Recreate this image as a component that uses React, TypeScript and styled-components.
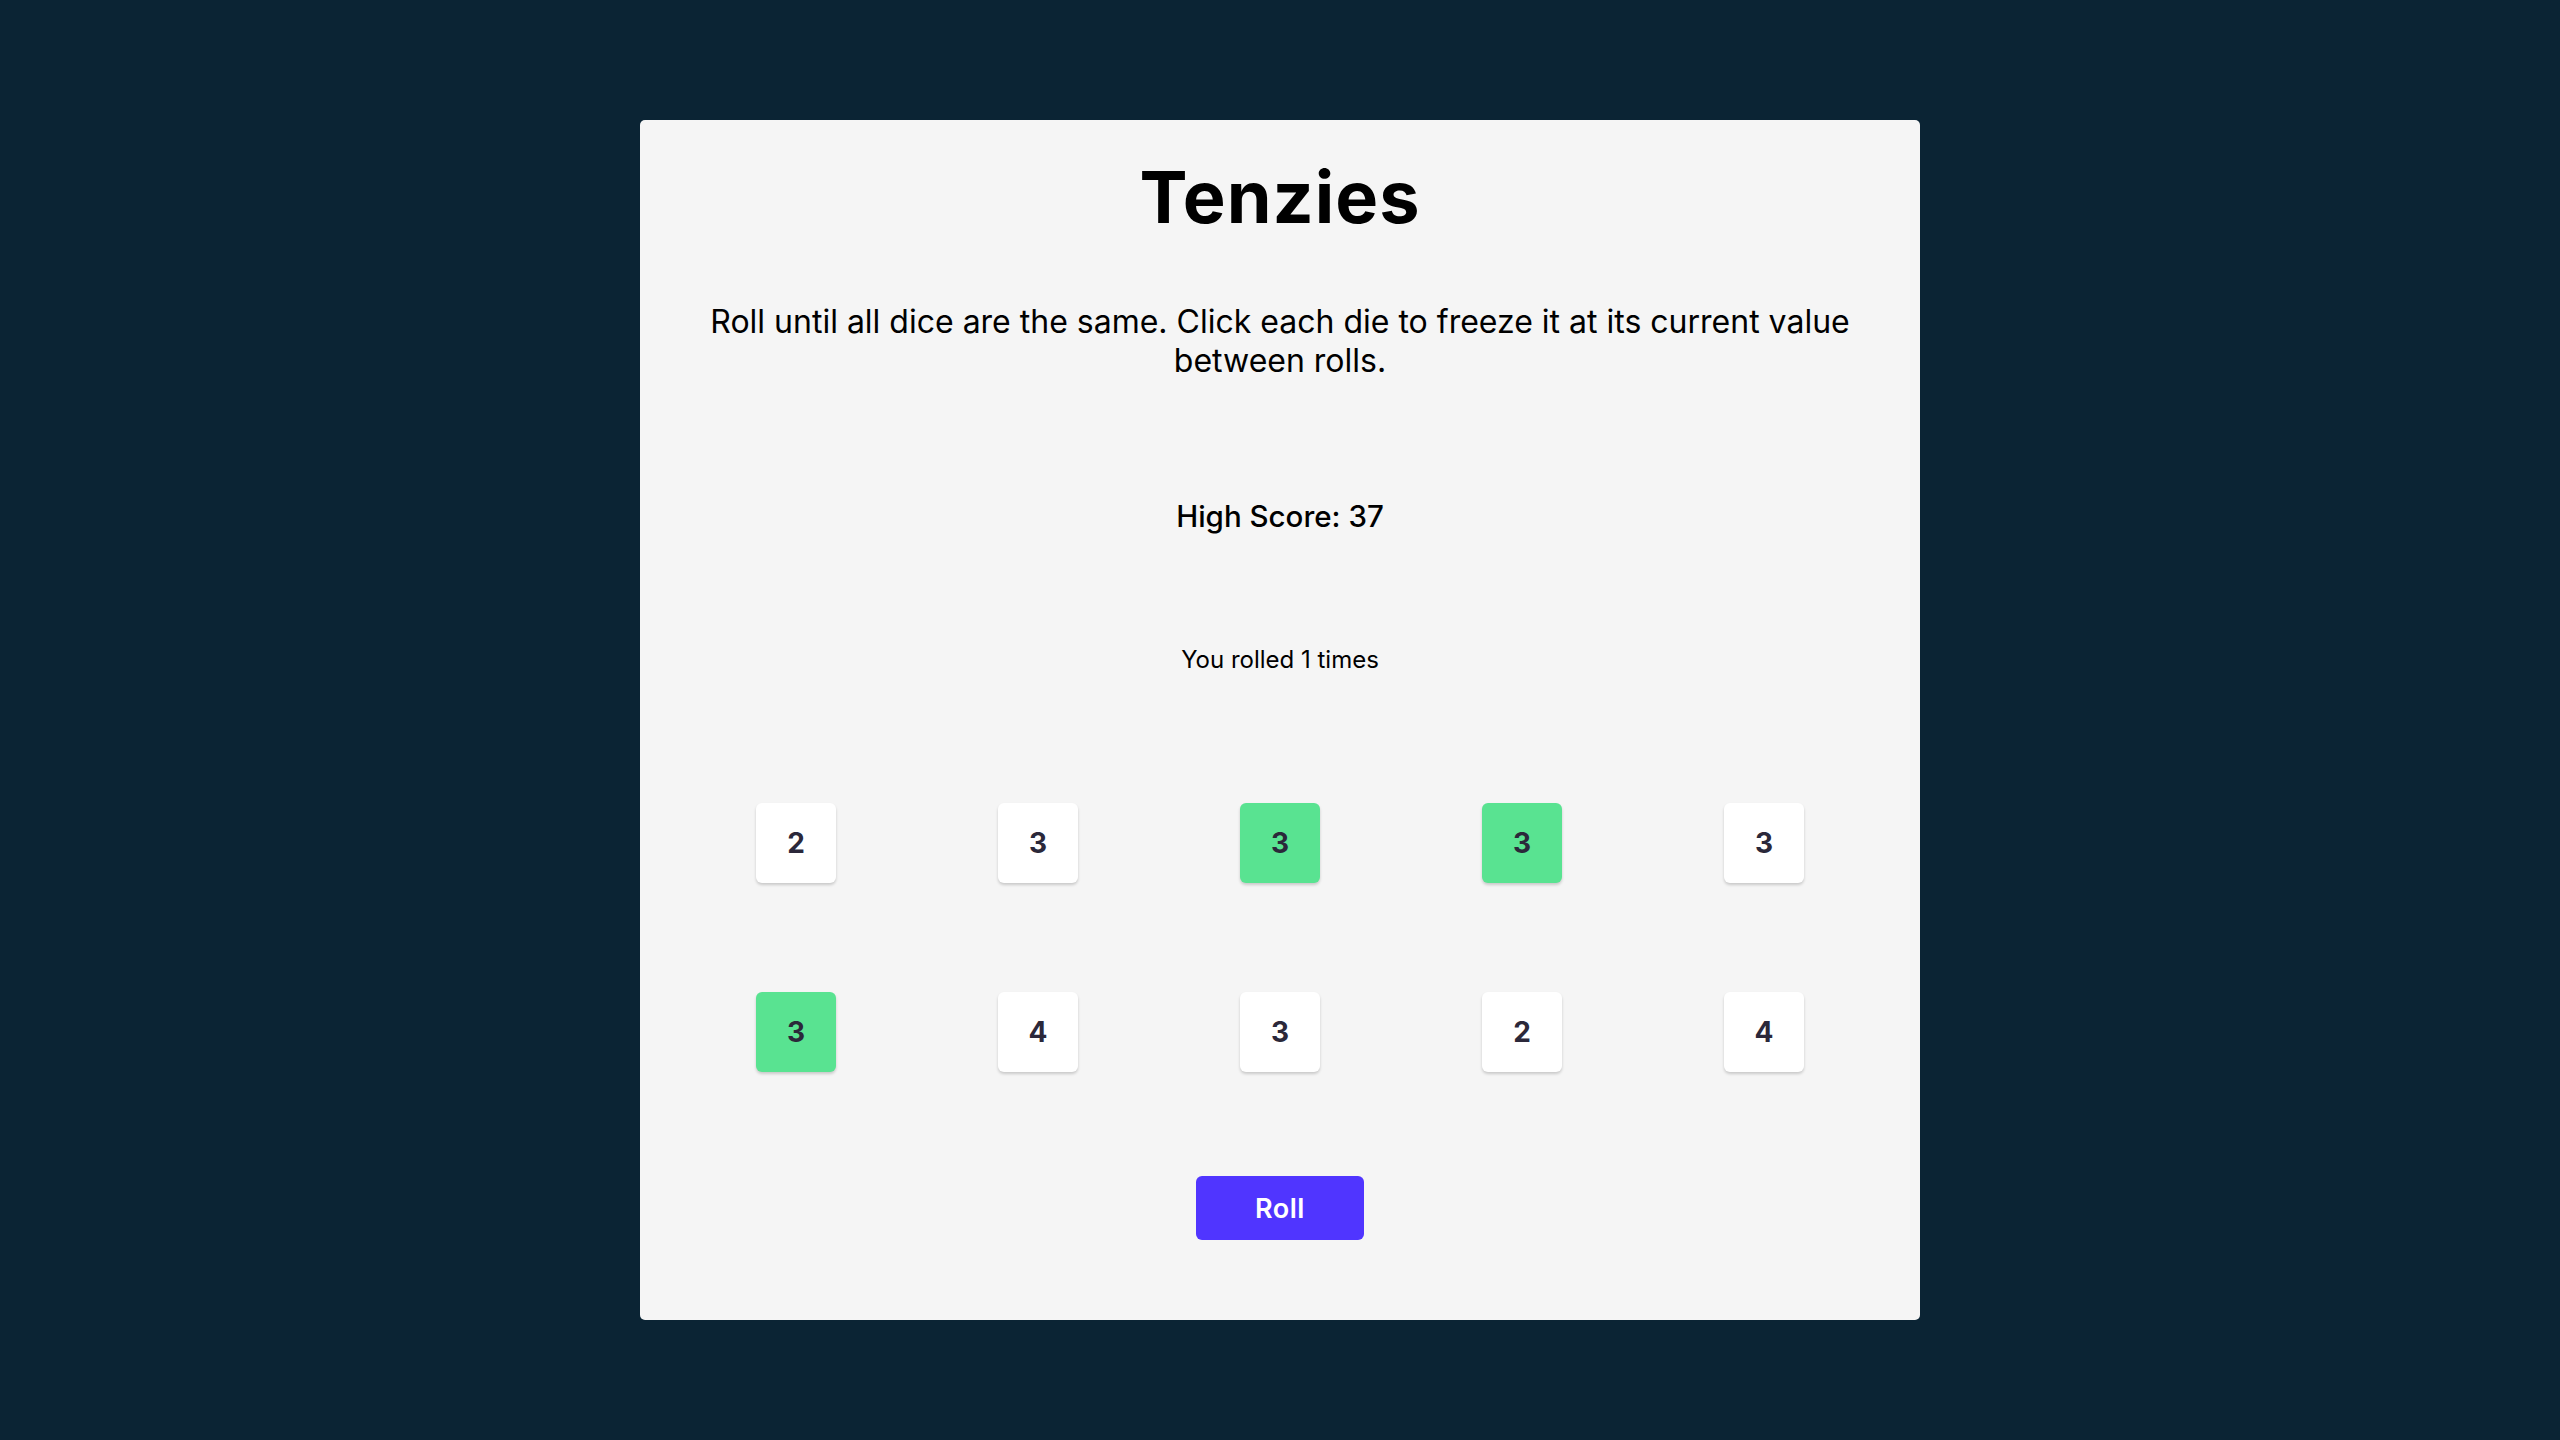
import styled, { createGlobalStyle } from 'styled-components'
import { FC, useState } from 'react'

type Die = {
  id: number
  value: number
  isHeld: boolean
}

const startingDice: Die[] = [
  { id: 1, value: 2, isHeld: false },
  { id: 2, value: 3, isHeld: false },
  { id: 3, value: 3, isHeld: true },
  { id: 4, value: 3, isHeld: true },
  { id: 5, value: 3, isHeld: false },
  { id: 6, value: 3, isHeld: true },
  { id: 7, value: 4, isHeld: false },
  { id: 8, value: 3, isHeld: false },
  { id: 9, value: 2, isHeld: false },
  { id: 10, value: 4, isHeld: false }
]

const randomValue = () => Math.ceil(Math.random() * 6)

const GlobalStyle = createGlobalStyle`
  html,
  body {
    margin: 0;
    padding: 0;
    background-color: #0b2434;
    font-family: Inter, 'Noto Sans', sans-serif;
  }

  * {
    box-sizing: border-box;
  }
`

const App: FC = () => {
  const [dice, setDice] = useState<Die[]>(startingDice)
  const [rolls, setRolls] = useState(1)
  const highScore = 37

  const holdDie = (id: number) => {
    setDice((prev) =>
      prev.map((die) => (die.id === id ? { ...die, isHeld: !die.isHeld } : die))
    )
  }

  const rollDice = () => {
    setDice((prev) =>
      prev.map((die) => (die.isHeld ? die : { ...die, value: randomValue() }))
    )
    setRolls((n) => n + 1)
  }

  return (
    <>
      <GlobalStyle />
      <StyledPage>
        <StyledBoard>
          <StyledTitle>Tenzies</StyledTitle>
          <StyledInstructions>
            Roll until all dice are the same. Click each die to freeze it at its
            current value between rolls.
          </StyledInstructions>
          <StyledHighScore>High Score: {highScore}</StyledHighScore>
          <StyledRollCount>You rolled {rolls} times</StyledRollCount>

          <StyledDiceGrid>
            {dice.map((die) => (
              <StyledDie
                key={die.id}
                $held={die.isHeld}
                onClick={() => holdDie(die.id)}
              >
                {die.value}
              </StyledDie>
            ))}
          </StyledDiceGrid>

          <StyledRollButton onClick={rollDice}>Roll</StyledRollButton>
        </StyledBoard>
      </StyledPage>
    </>
  )
}

export default App

const StyledPage = styled.main`
  min-height: 100vh;
  display: flex;
  align-items: center;
  justify-content: center;
`

const StyledBoard = styled.section`
  width: 1280px;
  height: 1200px;
  padding: 33px 60px 80px;
  background-color: #f5f5f5;
  border-radius: 5px;
  display: flex;
  flex-direction: column;
  align-items: center;
  text-align: center;
  color: #000;
`

const StyledTitle = styled.h1`
  margin: 0;
  font-size: 72px;
  line-height: 88px;
  font-weight: 700;
  letter-spacing: 1px;
`

const StyledInstructions = styled.p`
  margin: 61px 0 0;
  font-size: 32px;
  line-height: 39px;
  font-weight: 400;
`

const StyledHighScore = styled.h3`
  margin: 119px 0 0;
  font-size: 29.5px;
  line-height: 35px;
  font-weight: 500;
`

const StyledRollCount = styled.p`
  margin: 111px 0 0;
  font-size: 24px;
  line-height: 29px;
  font-weight: 400;
`

const StyledDiceGrid = styled.div`
  margin-top: 129px;
  display: grid;
  grid-template-columns: repeat(5, 80px);
  grid-auto-rows: 80px;
  column-gap: 162px;
  row-gap: 109px;
`

const StyledDie = styled.button<{ $held: boolean }>`
  width: 80px;
  height: 80px;
  border: 0;
  padding: 0;
  border-radius: 6px;
  background-color: ${({ $held }) => ($held ? '#59e391' : '#ffffff')};
  box-shadow: 0 2px 3px rgba(0, 0, 0, 0.18);
  font-family: Inter, sans-serif;
  font-size: 28px;
  font-weight: 700;
  color: #2b283a;
  cursor: pointer;
`

const StyledRollButton = styled.button`
  margin-top: 104px;
  width: 168px;
  height: 64px;
  border: 0;
  border-radius: 6px;
  background-color: #5035ff;
  color: #ffffff;
  font-family: Inter, sans-serif;
  font-size: 27px;
  font-weight: 600;
  letter-spacing: 0.5px;
  cursor: pointer;
`
